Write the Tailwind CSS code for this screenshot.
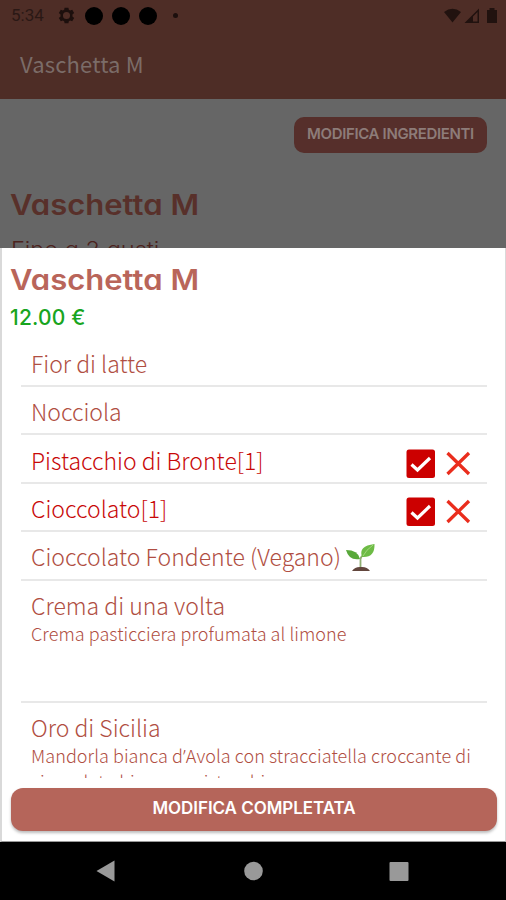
<!DOCTYPE html>
<html lang="it">
<head>
<meta charset="utf-8">
<title>Vaschetta M</title>
<script src="https://cdn.jsdelivr.net/npm/@tailwindcss/browser@4"></script>
</head>
<body class="w-[506px] h-[900px] overflow-hidden bg-black font-['Noto_Sans_CJK_SC',sans-serif]">
<div class="relative w-[506px] h-[900px] flex flex-col overflow-hidden">
  <header class="h-[99px] bg-[#4e2d26] shrink-0">
    <div class="h-[31px] flex items-center pl-[11px] pr-[8px]">
      <span class="w-[47px] text-[17px] leading-[31px] font-['Roboto',sans-serif] text-[#2a1815]">5:34</span>
      <svg class="w-[17px] h-[17px]" viewBox="0 0 24 24" fill="#1c0f0d"><path fill-rule="evenodd" d="M9.3 1h5.4l.6 3 1.8 1 3-1 2.7 4.6-2.4 2.1v2.6l2.4 2.1-2.7 4.6-3-1-1.800 1-.6 3H9.300l-.6-3-1.800-1-3 1-2.700-4.600 2.400-2.100v-2.600L1.200 8.600 3.900 4l3 1 1.800-1zM12 7a5 5 0 1 0 0 10 5 5 0 0 0 0-10z"/></svg>
      <div class="flex gap-[9px] ml-[9.500px]">
        <i class="size-[18px] rounded-full bg-black"></i><i class="size-[18px] rounded-full bg-black"></i><i class="size-[18px] rounded-full bg-black"></i>
      </div>
      <i class="size-[5px] rounded-full bg-[#1c0f0d] ml-[16px]"></i>
      <svg class="w-[54px] h-[18px] ml-auto" viewBox="0 0 54 18" fill="#21120f"><path d="M0 5Q8.500-1.500 17 5L8.500 15.500z"/><path fill-rule="evenodd" d="M20.500 16L35 1.500V16zM29 9.500V14.500H33.500V5z"/><path d="M43 3h2.500V1h5v2H53v13H43z"/></svg>
    </div>
    <h1 class="pl-[20px] pt-[15px] text-[22px] leading-[34px] tracking-[0.15px] text-[#7b6c68]">Vaschetta M</h1>
  </header>
  <main class="h-[149px] bg-[#666666] shrink-0 overflow-hidden">
    <div class="flex justify-end pt-[18px] pr-[19px]">
      <button class="w-[193px] h-[36px] rounded-[10px] bg-[#562f2b] text-[#8d7c79] font-['Inter',sans-serif] font-semibold text-[15px] tracking-[-0.35px] leading-[34px] pb-[2px] whitespace-nowrap">MODIFICA INGREDIENTI</button>
    </div>
    <h2 class="ml-[10px] mt-[32px] h-[40px] w-fit origin-left scale-x-[1.108] text-[28px] leading-[40px] font-['Inter',sans-serif] font-semibold text-[#58302a] [font-feature-settings:'cv11']">Vaschetta M</h2>
    <p class="ml-[11px] mt-[11px] w-fit origin-left scale-x-[1.07] text-[22px] leading-[26px] font-['Inter',sans-serif] font-light text-[#4c231e] [font-feature-settings:'cv11']">Fino a 2 gusti</p>
  </main>
  <section class="h-[594px] bg-white border-l-2 border-r border-[#d9d9d9] border-b border-b-[#999] shrink-0">
    <h2 class="ml-[8px] pt-[12px] h-[53px] w-fit origin-left scale-x-[1.108] text-[28px] leading-[40px] font-['Inter',sans-serif] font-semibold text-[#b9655a] [font-feature-settings:'cv11']">Vaschetta M</h2>
    <p class="pl-[8px] h-[37px] text-[21px] leading-[34px] tracking-[0.2px] font-['Inter',sans-serif] font-medium text-[#18a51e]">12.00 €</p>
    <ul class="mx-[19px] mr-[18px] h-[440px] overflow-hidden text-[23px] leading-[34px] font-light text-[#b04e42] whitespace-nowrap">
      <li class="h-[49px] pl-[10px] pt-[8px] border-b-2 border-[#e8e8e8]"><span>Fior di latte</span></li>
      <li class="h-[48px] pl-[10px] pt-[7px] border-b-2 border-[#e8e8e8]"><span>Nocciola</span></li>
      <li class="h-[49px] pl-[10px] pr-[16px] border-b-2 border-[#e8e8e8] flex items-start text-[#c80808]"><span class="pt-[8px]">Pistacchio di Bronte[1]</span>
        <svg class="ml-auto mt-[14px] w-[65px] h-[30px]" viewBox="0 0 65 30" fill="none"><rect x="0.500" y="0.500" width="28.500" height="28.500" rx="2.500" fill="#cc0000"/><path d="M5.500 15.500L11.500 21 24 9" stroke="#fff" stroke-width="3.200"/><path d="M41.500 4L63 25M63 4L41.500 25" stroke="#ea2d1d" stroke-width="3.300"/></svg></li>
      <li class="h-[48px] pl-[10px] pr-[16px] border-b-2 border-[#e8e8e8] flex items-start text-[#c80808]"><span class="pt-[7px]">Cioccolato[1]</span>
        <svg class="ml-auto mt-[13px] w-[65px] h-[30px]" viewBox="0 0 65 30" fill="none"><rect x="0.500" y="0.500" width="28.500" height="28.500" rx="2.500" fill="#cc0000"/><path d="M5.500 15.500L11.500 21 24 9" stroke="#fff" stroke-width="3.200"/><path d="M41.500 4L63 25M63 4L41.500 25" stroke="#ea2d1d" stroke-width="3.300"/></svg></li>
      <li class="h-[49px] pl-[10px] border-b-2 border-[#e8e8e8] flex items-start"><span class="pt-[7px] w-[315px]">Cioccolato Fondente (Vegano)</span>
        <svg class="mt-[11px] w-[30px] h-[30px]" viewBox="0 0 30 30"><path d="M14.500 26V16Q15 13 18 12" fill="none" stroke="#8fae72" stroke-width="1.800"/><path d="M0 7Q12 7 14 16Q3 18 0 7z" fill="#58a83a"/><path d="M28.500 1Q29 15 16 14Q12 3 28.500 1z" fill="#6dbb45"/><path d="M17 13Q20 7 27 2" stroke="#a2d67b" fill="none"/><path d="M6 28Q9 23.500 15 24Q21 23.500 24 28z" fill="#62463d"/></svg></li>
      <li class="h-[122px] pl-[10px] pt-[7px] border-b-2 border-[#e8e8e8]"><span class="block">Crema di una volta</span><span class="block mt-[-2px] text-[18px] tracking-[0.07px] leading-[26px]">Crema pasticciera profumata al limone</span></li>
      <li class="pl-[10px] pt-[7px]"><span class="block">Oro di Sicilia</span><span class="block mt-[-2px] text-[18px] tracking-[0.07px] leading-[26px]">Mandorla bianca d<span class="font-['Noto_Sans',sans-serif] leading-none">’</span>Avola con stracciatella croccante di<br>cioccolato bianco e pistacchio</span></li>
    </ul>
    <button class="block mt-[10px] ml-[9px] w-[486px] h-[43px] rounded-[12px] bg-[#b5655a] shadow-[0_2px_3px_#0004] text-white font-['Inter',sans-serif] font-semibold text-[17px] tracking-[-0.05px] leading-[41px] pb-[2px]">MODIFICA COMPLETATA</button>
  </section>
  <nav class="h-[58px] bg-black">
    <svg class="w-[506px] h-[58px]" viewBox="0 0 506 58" fill="#999"><path d="M96.500 29L114.500 18.500V39.500z"/><circle cx="253.500" cy="29" r="9.300"/><rect x="389.500" y="20" width="19" height="19" rx="1"/></svg>
  </nav>
</div>
</body>
</html>
